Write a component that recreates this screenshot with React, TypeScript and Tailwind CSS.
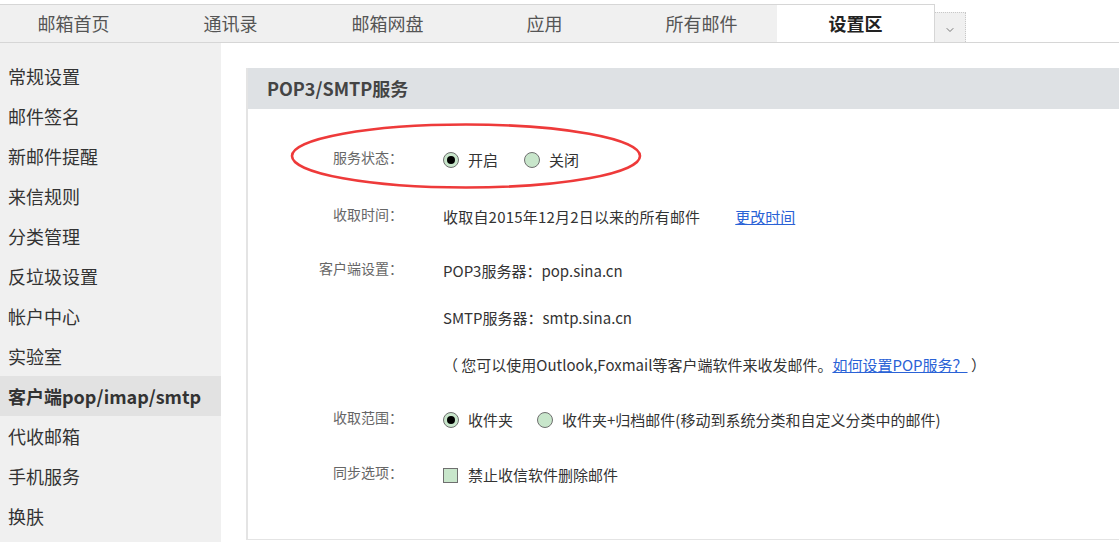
import { ChevronDown } from 'lucide-react';

const tabs = ['邮箱首页', '通讯录', '邮箱网盘', '应用', '所有邮件', '设置区'];

const menu = [
	'常规设置',
	'邮件签名',
	'新邮件提醒',
	'来信规则',
	'分类管理',
	'反垃圾设置',
	'帐户中心',
	'实验室',
	'客户端pop/imap/smtp',
	'代收邮箱',
	'手机服务',
	'换肤',
];

const font = { fontFamily: '"Noto Sans CJK SC", "Noto Sans", sans-serif' };

const Radio = ({ checked }: { checked?: boolean }) => (
	<span className="flex size-[16px] shrink-0 items-center justify-center rounded-full border-[1.5px] border-[#6f6f6f] bg-[#c8e6cb]">
		{checked && <span className="size-[8px] rounded-full bg-black" />}
	</span>
);

const Row = ({ label, children, className }: { label: string; children: React.ReactNode; className?: string }) => (
	<div className={`flex items-start ${className ?? ''}`}>
		<div className="w-[155px] shrink-0 text-right text-[14px] leading-[14px] text-[#666]">{label}</div>
		<div className="ml-[40px] text-[15px] leading-[20px] text-[#333]">{children}</div>
	</div>
);

export default function App() {
	return (
		<div className="h-[542px] w-[1119px] overflow-hidden bg-white" style={font}>
			{/* top nav */}
			<div className="flex items-end border-b border-[#d6d6d6] pt-[4px]">
				<div className="-ml-2 flex h-[38px] border-t border-[#d6d6d6] bg-[#f0f0f0]">
					{tabs.map((t, i) =>
						i === tabs.length - 1 ? (
							<div
								key={t}
								className="flex w-[158px] items-center justify-center border-r border-[#d6d6d6] bg-white pb-px text-[18px] font-bold text-[#222]"
							>
								{t}
							</div>
						) : (
							<div key={t} className="flex w-[157px] items-center justify-center pb-px pl-[6px] text-[18px] text-[#555]">
								{t}
							</div>
						)
					)}
				</div>
				<div className="flex h-[30px] w-[31px] items-center justify-center border-t border-r border-dotted border-[#c8c8c8] bg-[#f0f0f0]">
					<ChevronDown className="mt-1 size-[12px] text-[#777]" strokeWidth={2} />
				</div>
			</div>

			<div className="flex h-[499px]">
				{/* sidebar */}
				<div className="w-[221px] shrink-0 bg-[#f0f0f0] pt-[13px]">
					{menu.map((m) => (
						<div
							key={m}
							className={
								m.startsWith('客户端')
									? 'flex h-10 items-center bg-[#e2e2e2] pl-[8px] text-[18px] font-bold text-[#333]'
									: 'flex h-10 items-center pl-[8px] text-[18px] text-[#333]'
							}
						>
							{m}
						</div>
					))}
				</div>

				{/* panel */}
				<div className="relative mt-[25px] ml-[25px] h-[472px] flex-1 border-b border-l-2 border-[#e4e4e4]">
					<div className="flex h-[41px] items-center bg-[#dee1e4] pl-[19px] text-[18px] font-bold text-[#444]">
						POP3/SMTP服务
					</div>

					<div className="flex flex-col pt-[41px]">
						<Row label="服务状态：">
							<div className="flex items-center">
								<Radio checked />
								<span className="ml-[9px]">开启</span>
								<span className="ml-[26px]">
									<Radio />
								</span>
								<span className="ml-[9px]">关闭</span>
							</div>
						</Row>

						<Row label="收取时间：" className="mt-[37px]">
							<div className="flex">
								<span className="tracking-[0.2px]">收取自2015年12月2日以来的所有邮件</span>
								<a className="ml-[35px] text-[#2a62d6] underline">更改时间</a>
							</div>
						</Row>

						<Row label="客户端设置：" className="mt-[34px]">
							<div className="flex flex-col gap-[27px]">
								<span>POP3服务器：pop.sina.cn</span>
								<span>SMTP服务器：smtp.sina.cn</span>
								<span>
									（ 您可以使用Outlook,Foxmail等客户端软件来收发邮件。
									<a className="text-[#2a62d6] underline">如何设置POP服务？</a> ）
								</span>
							</div>
						</Row>

						<Row label="收取范围：" className="mt-[35px]">
							<div className="flex items-center">
								<Radio checked />
								<span className="ml-[9px]">收件夹</span>
								<span className="ml-[24px]">
									<Radio />
								</span>
								<span className="ml-[9px]">收件夹+归档邮件(移动到系统分类和自定义分类中的邮件)</span>
							</div>
						</Row>

						<Row label="同步选项：" className="mt-[35px]">
							<div className="flex items-center">
								<span className="size-[15px] border-[1.5px] border-[#6f6f6f] bg-[#c8e6cb]" />
								<span className="ml-[10px]">禁止收信软件删除邮件</span>
							</div>
						</Row>
					</div>

					{/* red annotation ellipse */}
					<svg className="absolute top-[54px] left-[41px]" width="354" height="68" viewBox="0 0 354 68">
						<ellipse cx="177" cy="34" rx="174" ry="31.5" fill="none" stroke="#ee3a3a" strokeWidth="2.6" />
					</svg>
				</div>
			</div>
		</div>
	);
}
